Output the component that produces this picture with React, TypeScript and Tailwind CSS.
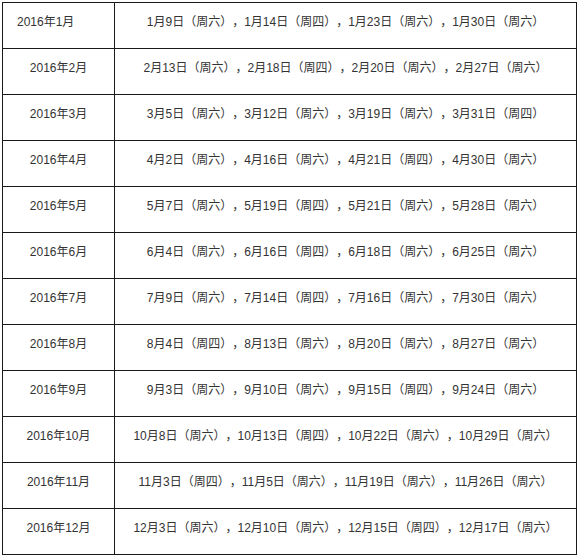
const ROWS: { month: string; dates: string; left?: boolean }[] = [
  { month: '2016年1月', dates: '1月9日（周六），1月14日（周四），1月23日（周六），1月30日（周六）', left: true },
  { month: '2016年2月', dates: '2月13日（周六），2月18日（周四），2月20日（周六），2月27日（周六）' },
  { month: '2016年3月', dates: '3月5日（周六），3月12日（周六），3月19日（周六），3月31日（周四）' },
  { month: '2016年4月', dates: '4月2日（周六），4月16日（周六），4月21日（周四），4月30日（周六）' },
  { month: '2016年5月', dates: '5月7日（周六），5月19日（周四），5月21日（周六），5月28日（周六）' },
  { month: '2016年6月', dates: '6月4日（周六），6月16日（周四），6月18日（周六），6月25日（周六）' },
  { month: '2016年7月', dates: '7月9日（周六），7月14日（周四），7月16日（周六），7月30日（周六）' },
  { month: '2016年8月', dates: '8月4日（周四），8月13日（周六），8月20日（周六），8月27日（周六）' },
  { month: '2016年9月', dates: '9月3日（周六），9月10日（周六），9月15日（周四），9月24日（周六）' },
  { month: '2016年10月', dates: '10月8日（周六），10月13日（周四），10月22日（周六），10月29日（周六）' },
  { month: '2016年11月', dates: '11月3日（周四），11月5日（周六），11月19日（周六），11月26日（周六）' },
  { month: '2016年12月', dates: '12月3日（周六），12月10日（周六），12月15日（周四），12月17日（周六）' },
];

export default function App() {
  return (
    <div
      className="w-[580px] h-[557px] bg-white pt-[2px] pl-[2px]"
      style={{ fontFamily: '"Liberation Sans", "Noto Sans CJK SC", sans-serif' }}
    >
      <table className="w-[575px] border-collapse text-[12px] leading-[18px] text-[#333] [text-spacing-trim:space-all]">
        <tbody>
          {ROWS.map((row) => (
            <tr key={row.month} className="h-[46px]">
              <td
                className={`w-[112px] border border-[#1a1a1a] align-top pt-[10px] whitespace-nowrap ${
                  row.left ? 'text-left pl-[14px]' : 'text-center'
                }`}
              >
                {row.month}
              </td>
              <td className="border border-[#1a1a1a] align-top pt-[10px] text-center whitespace-nowrap">
                {row.dates}
              </td>
            </tr>
          ))}
        </tbody>
      </table>
    </div>
  );
}
